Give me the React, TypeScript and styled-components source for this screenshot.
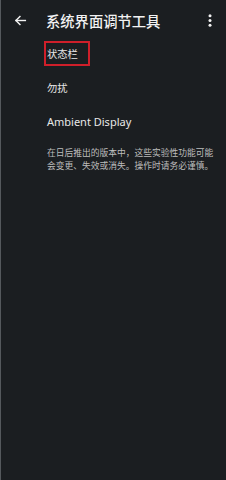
import * as React from 'react';
import styled, { createGlobalStyle } from 'styled-components';

const GlobalStyle = createGlobalStyle`
  html, body {
    margin: 0;
    padding: 0;
    background: #1b1e21;
  }
  * { box-sizing: border-box; }
`;

const Screen = styled.div`
  width: 226px;
  height: 480px;
  background: #1b1e21;
  border-left: 1px solid #55595d;
  font-family: 'Noto Sans CJK SC', 'Noto Sans', sans-serif;
  color: #ececec;
  overflow: hidden;
`;

const Toolbar = styled.div`
  height: 36px;
  display: flex;
  align-items: center;
  padding: 4px 8px 0 11px;
`;

const IconButton = styled.div`
  width: 16px;
  height: 16px;
  display: flex;
  align-items: center;
  justify-content: center;
`;

const Title = styled.div`
  flex: 1;
  margin-left: 18px;
  font-size: 14.3px;
  font-weight: 500;
  color: #f2f2f2;
`;

const List = styled.div`
  display: flex;
  flex-direction: column;
  padding-left: 43px;
  padding-right: 12px;
`;

const Row = styled.div`
  height: 34px;
  display: flex;
  align-items: center;
  font-family: 'Noto Sans CJK SC', 'Noto Sans', sans-serif;
  font-size: 10.3px;
  color: #e8e8e8;
  padding-left: 3px;
`;

const LatinRow = styled(Row)`
  font-family: 'Noto Sans', 'Noto Sans CJK SC', sans-serif;
  font-size: 11px;
`;

const Marked = styled.span`
  display: inline-flex;
  align-items: center;
  height: 25px;
  width: 46px;
  margin-left: -3px;
  padding-left: 1px;
  border: 2px solid #cf1f2a;
`;

const Note = styled.p`
  margin: 8px 0 0;
  padding-left: 3px;
  font-size: 8.75px;
  line-height: 13px;
  color: #bdbdbd;
`;

const App = () => (
  <>
    <GlobalStyle />
    <Screen>
      <Toolbar>
        <IconButton>
          <svg width="13" height="13" viewBox="0 0 24 24" fill="none" stroke="#f2f2f2" strokeWidth="2.6" strokeLinecap="square">
            <path d="M21 12H4" />
            <path d="M11 4.5 3.5 12l7.5 7.5" />
          </svg>
        </IconButton>
        <Title>系统界面调节工具</Title>
        <IconButton>
          <svg width="4" height="13" viewBox="0 0 4 13" fill="#f2f2f2">
            <circle cx="2" cy="1.8" r="1.5" />
            <circle cx="2" cy="6.5" r="1.5" />
            <circle cx="2" cy="11.2" r="1.5" />
          </svg>
        </IconButton>
      </Toolbar>
      <List>
        <Row>
          <Marked>状态栏</Marked>
        </Row>
        <Row>勿扰</Row>
        <LatinRow>Ambient Display</LatinRow>
        <Note>在日后推出的版本中，这些实验性功能可能会变更、失效或消失。操作时请务必谨慎。</Note>
      </List>
    </Screen>
  </>
);

export default App;
